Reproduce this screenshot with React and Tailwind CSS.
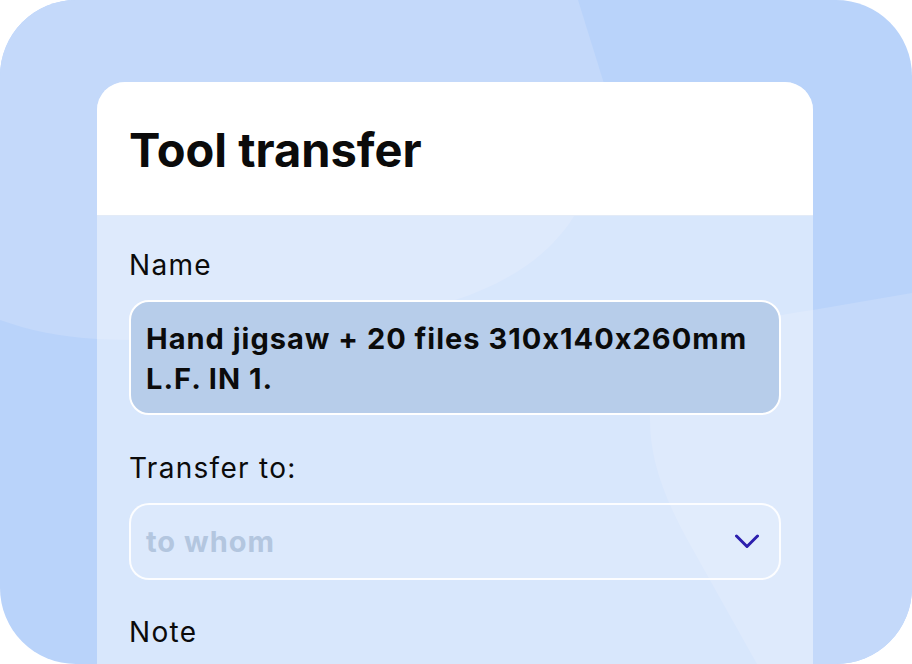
import React from 'react'

const font = { fontFamily: 'Inter, "Noto Sans", sans-serif' }

function Backdrop() {
  return (
    <svg className="absolute inset-0 h-full w-full" viewBox="0 0 912 664" preserveAspectRatio="none">
      <rect width="912" height="664" fill="#b9d3fa" />
      <path
        d="M0,0 H578 L606,90 C604,190 570,262 455,300 C360,330 220,344 97,339 C60,337 28,330 0,320 Z"
        fill="#c4d9fa"
      />
      <path
        d="M650,420 C650,360 700,325 813,310 L912,293 V664 H757 L692,548 C666,502 650,462 650,420 Z"
        fill="#c4d9fa"
      />
    </svg>
  )
}

function Chevron() {
  return (
    <svg width="24" height="15" viewBox="0 0 24 15" fill="none">
      <path d="M1.5 2 L12 12.5 L22.5 2" stroke="#2c1fae" strokeWidth="3" strokeLinecap="round" strokeLinejoin="round" />
    </svg>
  )
}

export default function App() {
  return (
    <div
      className="relative h-[664px] w-[912px] overflow-hidden rounded-[76px] bg-white [font-feature-settings:'calt'_0]"
      style={font}
    >
      <Backdrop />
      <div className="relative pl-[97px] pr-[99px] pt-[82px]">
        <div className="h-[600px] overflow-hidden rounded-t-[28px] bg-white/45">
          <div className="h-[134px] border-b border-[#e3ebf7] bg-white pl-[32px] pt-[40px]">
            <h1 className="text-[47px] font-bold leading-[56px] text-[#0b0b0b]">Tool transfer</h1>
          </div>
          <div className="flex flex-col px-[32px] pt-[32px] text-[#0b0b0b]">
            <label className="text-[28px] leading-[34px] tracking-[1.3px]">Name</label>
            <div className="mt-[18px] rounded-[20px] border-2 border-white bg-[#b7cdea] pb-[14px] pl-[15px] pr-[12px] pt-[17px] text-[29px] font-bold leading-[40px] tracking-[1px]">
              Hand jigsaw + 20 files 310x140x260mm
              <br />
              L.F. IN 1.
            </div>
            <label className="mt-[36px] text-[28px] leading-[34px] tracking-[1.3px]">Transfer to:</label>
            <div className="mt-[18px] flex h-[77px] items-center justify-between rounded-[20px] border-2 border-white/90 bg-white/10 pl-[15px] pr-[20px]">
              <span className="text-[29px] font-bold leading-[40px] tracking-[1px] text-[#b3c6df]">to whom</span>
              <Chevron />
            </div>
            <label className="mt-[35px] text-[28px] leading-[34px] tracking-[1.3px]">Note</label>
          </div>
        </div>
      </div>
    </div>
  )
}
